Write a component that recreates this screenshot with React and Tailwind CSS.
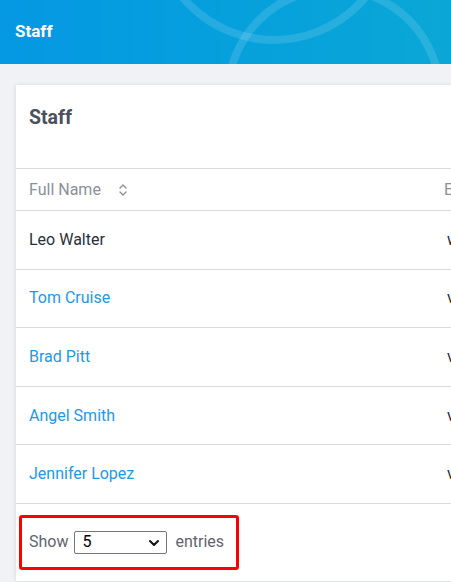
import { ChevronDown } from 'lucide-react'

const rows = [
  { name: 'Leo Walter', email: 'walter@company.com', link: false },
  { name: 'Tom Cruise', email: 'vtom@company.com', link: true },
  { name: 'Brad Pitt', email: 'vbrad@company.com', link: true },
  { name: 'Angel Smith', email: 'vangel@company.com', link: true },
  { name: 'Jennifer Lopez', email: 'vjlo@company.com', link: true },
]

function SortIcon() {
  return (
    <svg width="10" height="16" viewBox="0 0 10 16" fill="none" stroke="#8a909c" strokeWidth="1.4" strokeLinecap="round" strokeLinejoin="round">
      <path d="M2 6 L5 3 L8 6" />
      <path d="M2 10 L5 13 L8 10" />
    </svg>
  )
}

export default function App() {
  return (
    <div className="w-full min-h-[582px] overflow-hidden bg-[#f1f2f6]" style={{ fontFamily: 'Roboto, "Liberation Sans", sans-serif' }}>
      {/* top bar */}
      <div className="relative h-16 overflow-hidden bg-gradient-to-r from-[#0598e3] to-[#0aa7d6] flex items-center px-[15px]">
        <svg className="absolute inset-0" width="451" height="64" viewBox="0 0 451 64" fill="none" stroke="#ffffff" strokeOpacity="0.13" strokeWidth="8">
          <circle cx="274" cy="-79" r="119" />
          <circle cx="334" cy="95" r="106" />
        </svg>
        <h1 className="relative text-white font-bold text-[17px]">Staff</h1>
      </div>

      {/* card */}
      <div className="pl-4 pt-[21px]">
        <div className="w-[620px] bg-white shadow-[0_0_4px_rgba(0,0,0,0.12)]">
          <div className="h-[84px] px-[13px] pt-[18px] border-b border-[#d9dbe1]">
            <h2 className="text-[19.5px] font-bold text-[#4b505c]">Staff</h2>
          </div>

          <div className="flex h-[42px] items-center border-b border-[#d9dbe1] text-[16px] text-[#8a909c]">
            <div className="w-[415px] pl-[13px] flex items-center gap-[17px]">
              <span>Full Name</span>
              <SortIcon />
            </div>
            <div className="pl-[13px]">Email</div>
          </div>

          {rows.map((r) => (
            <div key={r.name} className="flex h-[58.6px] items-center border-b border-[#d9dbe1] text-[16px]">
              <div className={`w-[418px] pl-[13px] ${r.link ? 'text-[#1e98e8]' : 'text-[#2b2f38]'}`}>{r.name}</div>
              <div className="pl-[13px] text-[#25293a]">{r.email}</div>
            </div>
          ))}

          <div className="h-[77px] pt-[11px] pl-[3px]">
            <div className="w-[220px] h-[55px] border-[3px] border-[#ff0000] rounded-[3px] flex items-center pl-[7px] gap-[6px] text-[16px] text-[#5f6470]">
              <span>Show</span>
              <div className="relative w-[93px] h-[23px] border border-[#767676] rounded-[2px] bg-white flex items-center pl-[7px] text-black text-[16px]">
                <span>5</span>
                <ChevronDown className="absolute right-[4px] top-[3px]" size={16} strokeWidth={3} color="#111" />
              </div>
              <span className="ml-[2px]">entries</span>
            </div>
          </div>
        </div>
      </div>
    </div>
  )
}
